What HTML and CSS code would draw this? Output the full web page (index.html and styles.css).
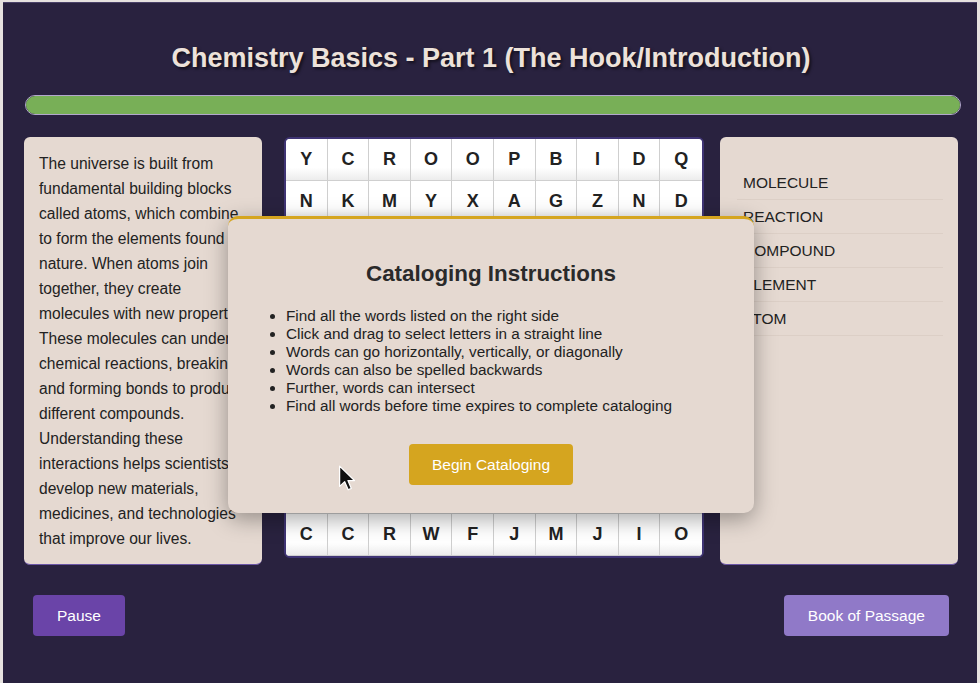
FILE: index.html
```html
<html>
<head>
  <meta charset="utf-8">
  <title>Chemistry Basics - Part 1</title>
  <link rel="stylesheet" href="styles.css">
</head>
<body>
  <div class="app">
    <h1 class="lesson-title">Chemistry Basics - Part 1 (The Hook/Introduction)</h1>
    <div class="progress"><div class="progress-fill"></div></div>

    <div class="main-row">
      <div class="panel reading">
        The universe is built from fundamental building blocks called atoms, which combine to form the elements found in nature. When atoms join together, they create molecules with new properties. These molecules can undergo chemical reactions, breaking and forming bonds to produce different compounds. Understanding these interactions helps scientists develop new materials, medicines, and technologies that improve our lives.
      </div>

      <div class="grid" id="letterGrid"></div>

      <div class="panel words">
        <ul class="word-list">
          <li>MOLECULE</li>
          <li>REACTION</li>
          <li>COMPOUND</li>
          <li>ELEMENT</li>
          <li>ATOM</li>
        </ul>
      </div>
    </div>

    <div class="footer">
      <button class="btn btn-pause">Pause</button>
      <button class="btn btn-book">Book of Passage</button>
    </div>

    <div class="modal">
      <h2>Cataloging Instructions</h2>
      <ul>
        <li>Find all the words listed on the right side</li>
        <li>Click and drag to select letters in a straight line</li>
        <li>Words can go horizontally, vertically, or diagonally</li>
        <li>Words can also be spelled backwards</li>
        <li>Further, words can intersect</li>
        <li>Find all words before time expires to complete cataloging</li>
      </ul>
      <button class="btn btn-begin">Begin Cataloging</button>
    </div>

    <svg class="pointer" width="19" height="27" viewBox="0 0 16 24">
      <path d="M1 1 L1 19 L5.5 14.8 L8.6 22 L11.4 20.8 L8.4 13.8 L14.2 13.8 Z" fill="#111" stroke="#fff" stroke-width="1.1" stroke-linejoin="round"/>
    </svg>
  </div>

<script>
  var rows = [
    "YCROOPBIDQ",
    "NKMYXAGZND",
    "MOLECULEKT",
    "RTAEWCHPMO",
    "EVBLIOSFUM",
    "AXQEDMJRGA",
    "CTNMPPOKLY",
    "TUBEZOVRSH",
    "INOTGUFEPW",
    "CCRWFJMJIO"
  ];
  var grid = document.getElementById("letterGrid");
  for (var r = 0; r < rows.length; r++) {
    for (var c = 0; c < rows[r].length; c++) {
      var cell = document.createElement("div");
      cell.className = "cell";
      cell.textContent = rows[r].charAt(c);
      grid.appendChild(cell);
    }
  }
</script>
</body>
</html>
```

FILE: styles.css
```css
html, body {
  margin: 0;
  padding: 0;
  background: #e6e2df;
  font-family: "Liberation Sans", Arial, Helvetica, sans-serif;
}
.app {
  position: relative;
  margin: 2px 3px 0 3px;
  min-height: 681px;
  background: #29223f;
  border-top: 1px solid #4a4268;
  box-sizing: border-box;
  padding: 0 19px 0 21px;
}
.lesson-title {
  margin: 0;
  padding-top: 40px;
  text-align: center;
  font-size: 27px;
  font-weight: bold;
  color: #ede2da;
  text-shadow: 2px 2px 3px rgba(0, 0, 0, 0.55);
}
.progress {
  margin: 21px -3px 0 1px;
  height: 20px;
  border-radius: 10px;
  border: 1px solid #b2a8cc;
  background: #3a3260;
  overflow: hidden;
  box-sizing: border-box;
}
.progress-fill {
  width: 100%;
  height: 100%;
  background: #78af57;
}
.main-row {
  display: flex;
  margin-top: 22px;
}
.panel {
  width: 238px;
  height: 428px;
  box-sizing: border-box;
  background: #e5d9d1;
  border-radius: 6px;
  border-bottom: 1px solid #6b56a6;
}
.reading {
  padding: 14px 8px 0 15px;
  font-size: 15.6px;
  line-height: 25px;
  color: #222;
}
.grid {
  margin: 0 16px 0 22px;
  width: 420px;
  height: 421px;
  box-sizing: border-box;
  border: 2px solid #3f3474;
  border-radius: 6px;
  overflow: hidden;
  display: grid;
  grid-template-columns: repeat(10, 1fr);
  grid-template-rows: repeat(10, 1fr);
  background: #fff;
}
.cell {
  display: flex;
  align-items: center;
  justify-content: center;
  font-size: 18px;
  font-weight: bold;
  color: #222;
  background: linear-gradient(#ffffff 70%, #ececec);
  border-right: 1px solid #cfcfcf;
  border-bottom: 1px solid #cfcfcf;
}
.cell:nth-child(10n) {
  border-right: none;
}
.words {
  padding: 29px 15px 0 17px;
}
.word-list {
  list-style: none;
  margin: 0;
  padding: 0;
}
.word-list li {
  padding: 8px 6px;
  line-height: 17px;
  font-size: 15.5px;
  color: #222;
  border-bottom: 1px solid #dccfc6;
}
.footer {
  display: flex;
  justify-content: space-between;
  margin-top: 30px;
  padding: 0 9px;
}
.btn {
  border: none;
  border-radius: 4px;
  padding: 12px 26px;
  font-family: "Liberation Sans", Arial, Helvetica, sans-serif;
  font-size: 15.5px;
  line-height: 17px;
  color: #fff;
  cursor: pointer;
}
.btn-pause {
  background: #6a44a8;
  padding: 12px 24px;
}
.btn-book {
  background: #9079c8;
  padding: 12px 24px;
}
.btn-begin {
  background: #d5a51f;
  padding: 12px 23px;
}
.modal {
  position: absolute;
  top: 213px;
  left: 50%;
  margin-left: -262px;
  width: 526px;
  box-sizing: border-box;
  background: #e5d9d1;
  border-top: 3px solid #d5a51f;
  border-radius: 10px;
  padding: 42px 20px 28px;
  text-align: center;
  box-shadow: 0 6px 22px rgba(0, 0, 0, 0.35);
}
.modal h2 {
  margin: 0 0 20px;
  font-size: 22.4px;
  line-height: 26px;
  color: #2a2a2a;
}
.modal ul {
  margin: 0 0 29px;
  padding-left: 38px;
  text-align: left;
  font-size: 15.3px;
  line-height: 18px;
  color: #222;
}
.pointer {
  position: absolute;
  left: 335px;
  top: 462px;
}
```
